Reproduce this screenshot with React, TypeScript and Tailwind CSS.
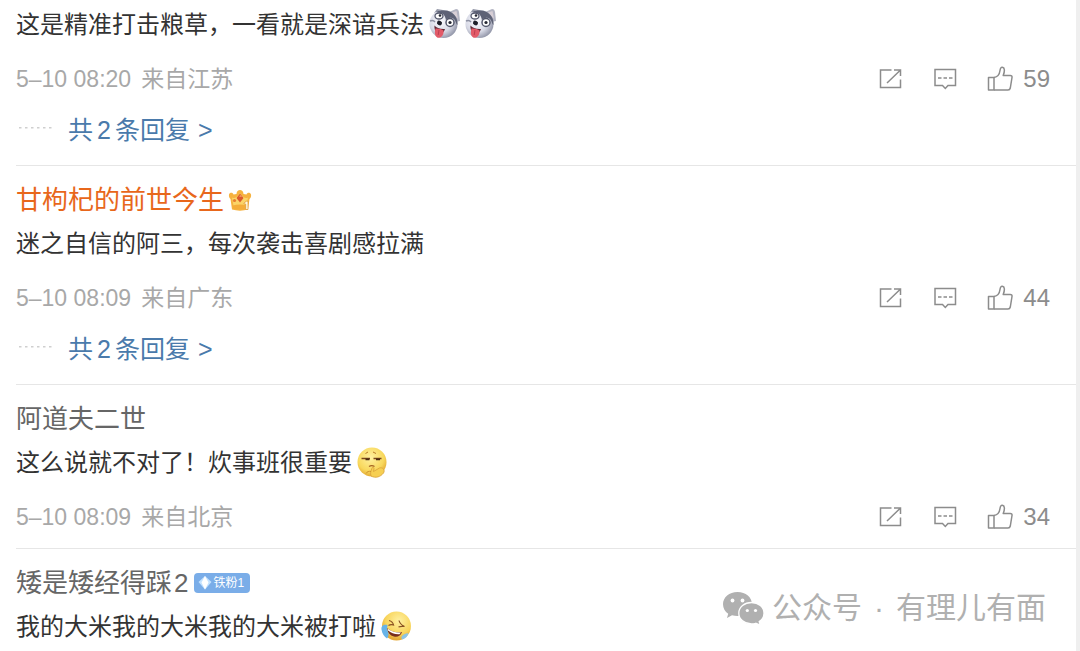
import type { ReactNode } from "react";

type EmojiName = "husky" | "think" | "rofl";

interface Comment {
  id: string;
  author?: string;
  authorNumber?: string;
  vip?: boolean;
  fanBadge?: string;
  text: string;
  emojis: EmojiName[];
  time?: string;
  region?: string;
  likes?: number;
  replies?: number;
}

const comments: Comment[] = [
  {
    id: "1",
    text: "这是精准打击粮草，一看就是深谙兵法",
    emojis: ["husky", "husky"],
    time: "5–10 08:20",
    region: "来自江苏",
    likes: 59,
    replies: 2,
  },
  {
    id: "2",
    author: "甘枸杞的前世今生",
    vip: true,
    text: "迷之自信的阿三，每次袭击喜剧感拉满",
    emojis: [],
    time: "5–10 08:09",
    region: "来自广东",
    likes: 44,
    replies: 2,
  },
  {
    id: "3",
    author: "阿道夫二世",
    text: "这么说就不对了！炊事班很重要",
    emojis: ["think"],
    time: "5–10 08:09",
    region: "来自北京",
    likes: 34,
  },
  {
    id: "4",
    author: "矮是矮经得踩",
    authorNumber: "2",
    fanBadge: "铁粉1",
    text: "我的大米我的大米我的大米被打啦",
    emojis: ["rofl"],
  },
];

function HuskyEmoji() {
  return (
    <svg viewBox="0 0 32 32" className="w-8 h-8 shrink-0" aria-hidden="true">
      <defs>
        <radialGradient id="husky-face" cx="40%" cy="40%" r="65%">
          <stop offset="0" stopColor="#fbfbff" />
          <stop offset="0.6" stopColor="#d8dae6" />
          <stop offset="1" stopColor="#8e92a5" />
        </radialGradient>
      </defs>
      <path d="M21 3 28 0c2 0 2.500 1 3 3l1 9-5 1z" fill="#b3b4c2" />
      <path d="M24 3.500 28.500 2l1.500 8z" fill="#d8cfd6" />
      <path d="M6 4 9 0l6 1z" fill="#9599a9" />
      <circle cx="15.500" cy="15" r="14" fill="url(#husky-face)" />
      <path d="M8 3c4-2.500 11-2.500 15.500.5C28 6.500 30 11 29.400 16c-1.400-1-1.400-4-3.400-6-2.500-2-6-1.500-8 1.500-.5-3-1.500-6-4-7C12 3.500 10 4 8 3z" fill="#5e6276" />
      <path d="M2 12c2-1 3.500-1 5 1" fill="none" stroke="#8c90a2" strokeWidth="1.500" />
      <ellipse cx="11" cy="7" rx="4" ry="3" fill="#fff" stroke="#565a6e" strokeWidth="1.300" />
      <circle cx="12" cy="6.500" r="1.300" fill="#252733" />
      <circle cx="22" cy="13.500" r="4" fill="#fff" stroke="#565a6e" strokeWidth="1.500" />
      <circle cx="22" cy="13.500" r="1.600" fill="#252733" />
      <ellipse cx="11.500" cy="14" rx="2.600" ry="2.200" fill="#1d1f2a" transform="rotate(25 11.500 14)" />
      <path d="M6.500 16.500c2 2.500 6 4 10.500 3.500-1 3.500-3.500 5-6 4.500-3-.5-5-4-4.500-8z" fill="#5a2733" />
      <path d="M7.500 19.500c3-.3 6.500.7 8 2 .5 3-1 6.500-4.500 7.300C7.500 29 6 25 7.500 19.500z" fill="#e25a68" />
      <path d="m11 21-.8 5" stroke="#b83c4e" strokeWidth="0.900" />
    </svg>
  );
}

function ThinkEmoji() {
  return (
    <svg viewBox="0 0 32 32" className="w-8 h-8 shrink-0" aria-hidden="true">
      <defs>
        <radialGradient id="think-face" cx="45%" cy="35%" r="65%">
          <stop offset="0" stopColor="#fff1a0" />
          <stop offset="0.7" stopColor="#f8d85c" />
          <stop offset="1" stopColor="#e4ab35" />
        </radialGradient>
      </defs>
      <circle cx="16" cy="15" r="14.500" fill="url(#think-face)" />
      <path d="M9.500 6.500 12 5M17 5l3 1.500" stroke="#b77b28" strokeWidth="1" fill="none" />
      <path d="M5.500 11.500H14M17.500 11.500h8" stroke="#7d4a1c" strokeWidth="1.300" />
      <path d="M9.500 12.300h4M20 12.300h4" stroke="#4d2b13" strokeWidth="1.800" />
      <path d="M13 19.500c1.500-1 4-1 5.500 0" stroke="#a46424" strokeWidth="1.300" fill="none" />
      <path d="M15 29c-1-3 0-5 1-8 .5-1.500 2-1 2 .5l-.5 3 6-3.500c3-1 6 2 4 5-3 4-8 5.500-12.500 3z" fill="#f6cf52" stroke="#dba63e" strokeWidth="0.900" />
      <path d="M15 24.500c-2-.5-4 0-5 2" stroke="#cf9630" strokeWidth="1" fill="none" />
    </svg>
  );
}

function RoflEmoji() {
  return (
    <svg viewBox="0 0 32 32" className="w-8 h-8 shrink-0" aria-hidden="true">
      <defs>
        <radialGradient id="rofl-face" cx="58%" cy="32%" r="65%">
          <stop offset="0" stopColor="#fff0a0" />
          <stop offset="0.7" stopColor="#f8d55c" />
          <stop offset="1" stopColor="#e5a936" />
        </radialGradient>
      </defs>
      <circle cx="16.500" cy="15" r="14.500" fill="url(#rofl-face)" />
      <path d="M9 9.500c2 .5 4 2 4.500 4.500-1.500-.5-3.500-.5-5 .5M19 9.500c.5 2.500 2.500 4.500 5.500 6-2-.3-4.500-.2-6 .5" fill="none" stroke="#8a5222" strokeWidth="1.200" />
      <path d="M7 17c4 3.500 9 5 15 4-1 3.500-4.500 5.500-8 4.500-4-1-6.500-4-7-8.500z" fill="#782d1c" />
      <path d="M7.500 17.500c4 3 8.500 4.500 13.500 4l-1.500 1.700C15 23.500 11 22 8 19.500z" fill="#fff" />
      <path d="M7.500 14C3.500 13 1 15 1.500 18.500c.5 4 3 7.500 5.500 9 2-2 2-6 0-9z" fill="#67b3e8" />
      <path d="M22 25c2.500-2 4.500-3 6.500-2.500-1 3-3 5-6 6-1.300-.8-1.500-2-.5-3.500z" fill="#8cc4e6" />
    </svg>
  );
}

const emojiMap: Record<EmojiName, () => ReactNode> = {
  husky: HuskyEmoji,
  think: ThinkEmoji,
  rofl: RoflEmoji,
};

function CrownIcon() {
  return (
    <svg viewBox="0 0 24 24" className="w-6 h-6 shrink-0" aria-hidden="true">
      <path d="M1 6.500C1.500 4 5 4 5.500 6.500L8.500 6C8.500.5 15.500.5 15.500 6l3 .5C19 4 22.500 4 23 6.500c.5 2-.5 3.500-1.500 4.500L20 21.500c-5 1.500-11 1.500-16 0L2.500 11C1.500 10 .6 8.500 1 6.500z" fill="#f6b23f" />
      <path d="M4 9.500c2.500 1.500 5 0 8-4.500 3 4.500 5.500 6 8 4.500L18.500 18h-13z" fill="#fbd468" />
      <path d="M4.500 17.500c5-1.200 10-1.200 15 0L19 20.500c-4.500 1.200-9.500 1.200-14 0z" fill="#f4ad3a" />
      <path d="M12 5.500 15.500 10 12 14.500 8.500 10z" fill="#dc5a2c" />
      <path d="m11 8.500 1.500-1.500L14 9z" fill="#f6a373" />
      <circle cx="6.500" cy="12.500" r="1.600" fill="#e77d31" />
      <path d="m16 15 2.500-1.800h1.500v8.300h-2.300V16H16z" fill="#fff8df" stroke="#dc9530" strokeWidth="0.700" />
    </svg>
  );
}

function FanBadge({ label }: { label: string }) {
  return (
    <span className="flex items-center gap-px h-5 w-14 pl-1 ml-1.5 rounded-sm bg-[#7aade8] text-white text-xs leading-5 shrink-0">
      <svg viewBox="0 0 14 14" className="w-[14px] h-[14px] shrink-0" aria-hidden="true">
        <path d="M7 0 13.500 6 7 13.500.5 6z" fill="#c3e2ff" />
        <path d="M7 0 10.500 6.500 7 13.500 3.500 6.500z" fill="#fff" />
      </svg>
      <span className="whitespace-nowrap">{label}</span>
    </span>
  );
}

function ShareIcon() {
  return (
    <svg viewBox="0 0 24 24" className="w-6 h-6" fill="none" stroke="currentColor" strokeWidth="1.500" aria-hidden="true">
      <path d="M12.500 3H1.500v17.500H21.500v-8" />
      <path d="M8 16 21 3.500M15 3h6.500v6" />
    </svg>
  );
}

function CommentIcon() {
  return (
    <svg viewBox="0 0 24 24" className="w-6 h-6" fill="none" stroke="currentColor" strokeWidth="1.500" aria-hidden="true">
      <path d="M2 2.500h20.500v16H15L12.300 21.500 9.500 18.500H2z" />
      <path d="M5 11h3.500M10.500 11h3.500M16 11h3.500" />
    </svg>
  );
}

function LikeIcon() {
  return (
    <svg viewBox="0 0 26 26" className="w-[26px] h-[26px]" fill="none" stroke="currentColor" strokeWidth="1.500" strokeLinejoin="round" aria-hidden="true">
      <path d="M1.500 11.500H7V24H1.500z" />
      <path d="M7 11.500c3.500-.5 5.500-3 6-7 .3-2.500 1.200-3.500 2.500-3.200 2.500.5 2.300 4.200.7 8.200h7c1.500 0 2 .8 1.800 2L23.300 22c-.3 1.400-1 2-2.300 2H7" />
    </svg>
  );
}

function CommentItem({ comment }: { comment: Comment }) {
  return (
    <article className="border-t border-[#e6e6e6] pt-[17px] pb-[14px] first:border-t-0 first:pt-2 last:pb-2">
      {comment.author && (
        <div
          className={`flex items-center mb-[10px] text-[26px] leading-[34px] ${
            comment.vip ? "text-[#e8671b]" : "text-[#666]"
          }`}
        >
          <a href="#" className="flex gap-0.5 whitespace-nowrap">
            <span>{comment.author}</span>
            {comment.authorNumber && <span>{comment.authorNumber}</span>}
          </a>
          {comment.vip && (
            <span className="ml-1">
              <CrownIcon />
            </span>
          )}
          {comment.fanBadge && <FanBadge label={comment.fanBadge} />}
        </div>
      )}

      <div className="flex items-center gap-1 text-2xl leading-[34px] text-[#333]">
        <p>{comment.text}</p>
        {comment.emojis.map((name, i) => {
          const Emoji = emojiMap[name];
          return <Emoji key={i} />;
        })}
      </div>

      {comment.time && (
        <div className="flex items-center justify-between mt-5 pr-[26px] text-[23px] leading-[34px] text-[#a8a8a8]">
          <p className="flex gap-[10px]">
            <span>{comment.time}</span>
            <span>{comment.region}</span>
          </p>
          <div className="flex items-center gap-[30px] text-[#8c8c8c]">
            <button aria-label="转发">
              <ShareIcon />
            </button>
            <button aria-label="评论">
              <CommentIcon />
            </button>
            <button aria-label="赞" className="flex items-center gap-[10px] text-2xl leading-[34px]">
              <LikeIcon />
              <span>{comment.likes}</span>
            </button>
          </div>
        </div>
      )}

      {comment.replies && (
        <div className="flex items-center mt-[17px] mb-1 text-[25px] leading-[34px]">
          <svg viewBox="0 0 36 10" className="w-9 h-[10px] mr-4" fill="#cfcfcf" aria-hidden="true">
            {[4, 10, 16, 22, 28, 34].map((x) => (
              <rect key={x} x={x - 1} y="2" width="2.500" height="1.500" />
            ))}
          </svg>
          <a href="#" className="flex gap-1 text-[#4a7aab]">
            <span>共</span>
            <span>{comment.replies}</span>
            <span>条回复</span>
            <span className="ml-1">&gt;</span>
          </a>
        </div>
      )}
    </article>
  );
}

function Watermark() {
  return (
    <div className="absolute right-[30px] bottom-[30px] flex items-center gap-2 text-[30px] leading-10 text-[#b0b0b0]">
      <svg viewBox="0 0 42 34" className="w-[42px] h-[34px]" aria-hidden="true">
        <path d="M15.500 1C7.200 1 1 6.400 1 13.200c0 4 2 7.300 5.200 9.500L5 27l5-2.700c1.800.5 3.600.8 5.500.8 8.300 0 14.500-5.300 14.500-12S23.800 1 15.500 1z" fill="currentColor" />
        <path d="M29.500 11.500c-7 0-12.700 4.700-12.700 10.700s5.700 10.800 12.700 10.800c1.500 0 3-.2 4.300-.7l4.400 1.700-1-3.400c3-2 4.800-5 4.800-8.400 0-6-5.500-10.700-12.500-10.700z" fill="currentColor" stroke="#fff" strokeWidth="1.300" />
        <circle cx="10.500" cy="9.500" r="1.900" fill="#fff" />
        <circle cx="20.500" cy="9.500" r="1.900" fill="#fff" />
        <circle cx="25.300" cy="19.500" r="1.600" fill="#fff" />
        <circle cx="33.500" cy="19.500" r="1.600" fill="#fff" />
      </svg>
      <p className="flex gap-3">
        <span>公众号</span>
        <span>·</span>
        <span>有理儿有面</span>
      </p>
    </div>
  );
}

export default function App() {
  return (
    <main className="relative min-h-screen bg-white pl-4 border-r-4 border-[#efefef] font-['Liberation_Sans','Noto_Sans_CJK_SC',sans-serif]">
      {comments.map((comment) => (
        <CommentItem key={comment.id} comment={comment} />
      ))}
      <Watermark />
    </main>
  );
}
